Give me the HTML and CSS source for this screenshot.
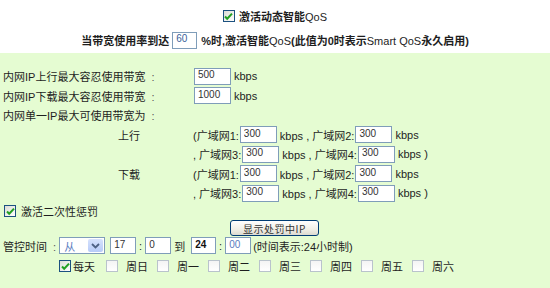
FILE: index.html
```html
<!DOCTYPE html>
<html lang="zh-CN">

<head>
  <meta charset="UTF-8">
  <title>智能QoS</title>
  <link rel="stylesheet" href="styles.css">
</head>

<body>
  <div class="top">
    <div class="top-line">
      <span class="cb on"><svg width="9" height="9" viewBox="0 0 9 9"><path d="M1 4.5l2.2 2.3L8 1.6" fill="none" stroke="#22a022" stroke-width="2"/></svg></span>
      <span class="title">激活动态智能<span class="lat">QoS</span></span>
    </div>
    <div class="top-line strong">
      <span>当带宽使用率到达</span>
      <input class="box pct" type="text" value="60">
      <span>%时,激活智能<span class="lat">QoS</span>(此值为0时表示<span class="lat">Smart QoS</span>永久启用)</span>
    </div>
  </div>

  <div class="panel">
    <div class="grid">
      <span>内网IP上行最大容忍使用带宽 <span class="colon">:</span></span>
      <div class="cell"><input class="box" type="text" value="500"><span>kbps</span></div>

      <span>内网IP下载最大容忍使用带宽 <span class="colon">:</span></span>
      <div class="cell"><input class="box" type="text" value="1000"><span>kbps</span></div>

      <span class="wide">内网单一IP最大可使用带宽为 <span class="colon">:</span></span>

      <span class="sub">上行</span>
      <div class="cell"><span>(广域网1:</span><input class="box" type="text" value="300"><span>kbps , 广域网2:</span><input class="box" type="text" value="300"><span>kbps</span></div>
      <span></span>
      <div class="cell"><span>, 广域网3:</span><input class="box" type="text" value="300"><span>kbps , 广域网4:</span><input class="box" type="text" value="300"><span>kbps )</span></div>

      <span class="sub">下载</span>
      <div class="cell"><span>(广域网1:</span><input class="box" type="text" value="300"><span>kbps , 广域网2:</span><input class="box" type="text" value="300"><span>kbps</span></div>
      <span></span>
      <div class="cell"><span>, 广域网3:</span><input class="box" type="text" value="300"><span>kbps , 广域网4:</span><input class="box" type="text" value="300"><span>kbps )</span></div>
    </div>

    <div class="opt">
      <span class="cb on"><svg width="9" height="9" viewBox="0 0 9 9"><path d="M1 4.5l2.2 2.3L8 1.6" fill="none" stroke="#22a022" stroke-width="2"/></svg></span>
      <span>激活二次性惩罚</span>
    </div>

    <div class="btn-row">
      <button class="btn" type="button">显示处罚中IP</button>
    </div>

    <div class="time-row">
      <span>管控时间 <span class="colon">:</span></span>
      <div class="select"><span class="sel-text">从</span><span class="sel-arrow"><svg width="9" height="6" viewBox="0 0 9 6"><path d="M1 1l3.5 3.5L8 1" fill="none" stroke="#4d6185" stroke-width="1.8"/></svg></span></div>
      <input class="box t" type="text" value="17">
      <span class="sep">:</span>
      <input class="box t" type="text" value="0">
      <span class="to">到</span>
      <input class="box t hour" type="text" value="24">
      <span class="sep">:</span>
      <input class="box t min" type="text" value="00">
      <span>(时间表示:24小时制)</span>
    </div>

    <div class="days">
      <label class="day first"><span class="cb on"><svg width="9" height="9" viewBox="0 0 9 9"><path d="M1 4.5l2.2 2.3L8 1.6" fill="none" stroke="#22a022" stroke-width="2"/></svg></span>每天</label>
      <label class="day"><span class="cb"></span>周日</label>
      <label class="day"><span class="cb"></span>周一</label>
      <label class="day"><span class="cb"></span>周二</label>
      <label class="day"><span class="cb"></span>周三</label>
      <label class="day"><span class="cb"></span>周四</label>
      <label class="day"><span class="cb"></span>周五</label>
      <label class="day"><span class="cb"></span>周六</label>
    </div>
  </div>
</body>

</html>
```

FILE: styles.css
```css
body {
  margin: 0;
  font-family: "Liberation Sans", "Noto Sans CJK SC", sans-serif;
  font-size: 11px;
  color: #1e1e1e;
  background: #fff;
}

.top {
  padding: 7px 0 4px;
}

.top-line {
  display: flex;
  justify-content: center;
  align-items: center;
  height: 18px;
}

.top-line + .top-line {
  margin-top: 6px;
}

.title,
.strong {
  font-weight: bold;
}

.lat {
  font-weight: normal;
}

.title {
  margin-left: 4px;
}

.colon {
  margin-left: 3px;
  color: #555;
}

.panel {
  background: #e5fcd2;
  padding: 13.5px 0 0 3px;
  height: 235px;
  box-sizing: border-box;
}

.grid {
  display: grid;
  grid-template-columns: 190px auto;
  grid-auto-rows: 19.5px;
  align-items: center;
}

.wide {
  grid-column: 1 / -1;
}

.sub {
  padding-left: 115px;
}

.cell {
  display: flex;
  align-items: center;
  white-space: pre;
}

.box {
  width: 37px;
  height: 17px;
  box-sizing: border-box;
  border: 1px solid #7f9db9;
  background: #fff;
  font-family: "Liberation Sans", sans-serif;
  font-size: 10px;
  color: #333;
  padding: 0 3px 3px;
  margin: 0 3px 0 1px;
  outline: none;
}

.pct {
  width: 25px;
  color: #3a5f9a;
  margin: 0 4px 0 3px;
}

.cb {
  display: inline-flex;
  align-items: center;
  justify-content: center;
  width: 12px;
  height: 12px;
  box-sizing: border-box;
  border: 1px solid #b9c3cc;
  background: linear-gradient(#f4f4f4, #fff);
  flex: none;
}

.cb.on {
  border-color: #1c5180;
  background: linear-gradient(135deg, #dcdcd6, #fff);
}

.opt {
  display: flex;
  align-items: center;
  gap: 5px;
  height: 16px;
  padding-left: 1px;
}

.btn-row {
  display: flex;
  align-items: center;
  height: 18px;
}

.btn {
  margin-left: 227px;
  width: 89px;
  height: 16px;
  padding: 0;
  border: 1px solid #003c74;
  border-radius: 3px;
  background: linear-gradient(#ffffff, #f0efe6 60%, #dcdad0);
  font-family: "Noto Sans CJK SC", sans-serif;
  font-size: 10px;
  color: #333;
  letter-spacing: 0.5px;
}

.time-row {
  display: flex;
  align-items: center;
  height: 17px;
}

.select {
  display: flex;
  align-items: center;
  justify-content: space-between;
  width: 46px;
  height: 17px;
  box-sizing: border-box;
  border: 1px solid #7f9db9;
  background: #fff;
  margin-left: 3px;
  padding: 1px;
}

.sel-text {
  color: #5a7cc0;
  padding-left: 3px;
}

.sel-arrow {
  display: flex;
  align-items: center;
  justify-content: center;
  width: 15px;
  height: 13px;
  border-radius: 2px;
  background: linear-gradient(#d6e2fd, #b7cbf8);
}

.t {
  width: 26px;
  margin: 0;
}

.select + .t {
  margin-left: 5px;
}

.sep {
  width: 9px;
  text-align: center;
}

.to {
  margin: 0 6px 0 3px;
}

.hour {
  width: 25px;
  font-weight: bold;
  color: #111;
}

.min {
  color: #5a7cc0;
  margin-right: 2px;
}

.days {
  display: flex;
  align-items: center;
  height: 16px;
  margin-top: 4px;
  padding-left: 56px;
}

.day {
  display: flex;
  align-items: center;
  gap: 8px;
  margin-right: 9px;
}

.day.first {
  gap: 2px;
  margin-right: 11px;
}
```
